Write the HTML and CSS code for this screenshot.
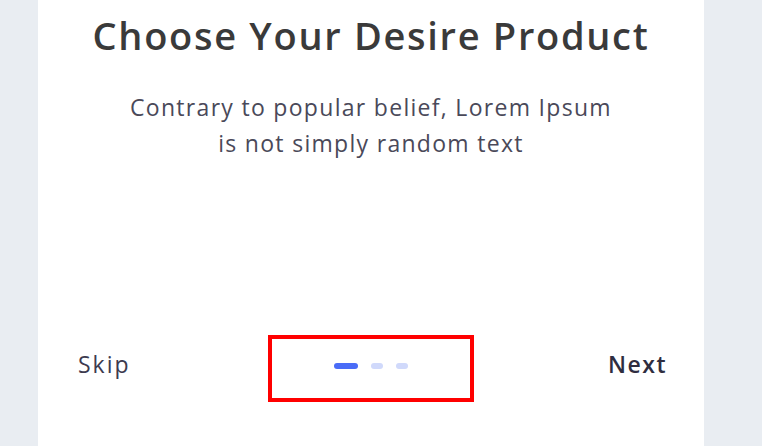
FILE: index.html
```html
<!DOCTYPE html>
<html lang="en">
<head>
<meta charset="utf-8">
<title>Onboarding</title>
<link rel="stylesheet" href="styles.css">
</head>
<body>
<main class="card">
  <h1 class="title">Choose Your Desire Product</h1>
  <p class="subtitle">Contrary to popular belief, Lorem Ipsum<br>is not simply random text</p>
  <div class="footer">
    <button class="link skip" type="button">Skip</button>
    <div class="pager">
      <span class="dot active"></span>
      <span class="dot"></span>
      <span class="dot"></span>
    </div>
    <button class="link next" type="button">Next</button>
  </div>
</main>
</body>
</html>
```

FILE: styles.css
```css
html, body {
  margin: 0;
  padding: 0;
  height: 100%;
}

body {
  background: #e9edf2;
  font-family: "Open Sans", "DejaVu Sans", sans-serif;
}

.card {
  box-sizing: border-box;
  width: 666px;
  height: 446px;
  margin-left: 38px;
  background: #ffffff;
  display: flex;
  flex-direction: column;
  align-items: center;
  padding-top: 12px;
}

.title {
  margin: 0;
  font-size: 38px;
  line-height: 46px;
  font-weight: 600;
  color: #3a3a3a;
  letter-spacing: 1.7px;
}

.subtitle {
  margin: 31px 0 0;
  font-size: 23px;
  line-height: 36px;
  font-weight: 400;
  color: #4a4959;
  text-align: center;
  letter-spacing: 1.3px;
}

.footer {
  margin-top: auto;
  margin-bottom: 44px;
  align-self: stretch;
  display: grid;
  grid-template-columns: 1fr auto 1fr;
  align-items: start;
  padding: 0 39px 0 38px;
}

.link {
  margin-top: 14px;
  background: none;
  border: 0;
  padding: 0;
  font-family: inherit;
  font-size: 23px;
  line-height: 30px;
  cursor: pointer;
}

.skip {
  justify-self: start;
  margin-left: 2px;
  font-weight: 500;
  color: #3d3b4f;
  letter-spacing: 2px;
}

.next {
  justify-self: end;
  margin-right: -2px;
  font-weight: 600;
  color: #2f2d40;
  letter-spacing: 1.5px;
}

.pager {
  box-sizing: border-box;
  width: 206px;
  height: 67px;
  border: 4px solid #ff0000;
  display: flex;
  align-items: center;
  justify-content: center;
  gap: 13px;
  padding-bottom: 5px;
}

.dot {
  width: 12px;
  height: 6px;
  border-radius: 3px;
  background: #d0d9fb;
}

.dot.active {
  width: 24px;
  background: #4a6cf7;
}
```
